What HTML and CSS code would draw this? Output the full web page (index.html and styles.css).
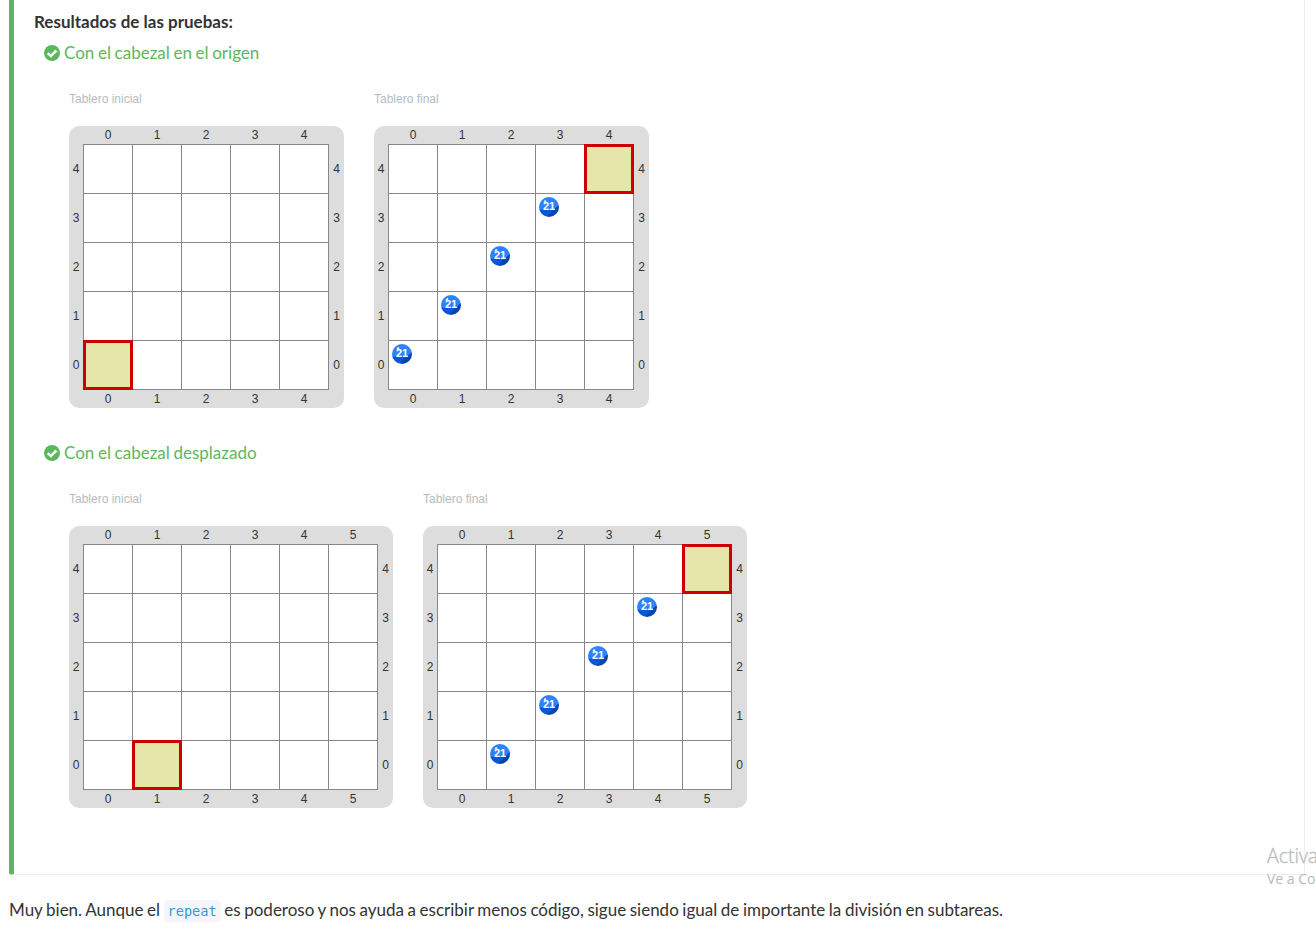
FILE: index.html
```
<!DOCTYPE html>
<html lang="es">
<head>
<meta charset="utf-8">
<title>Resultados de las pruebas</title>
<link rel="stylesheet" href="styles.css">
</head>
<body>
<section class="results">
  <strong class="results-title">Resultados de las pruebas:</strong>

  <article class="test">
    <h2 class="test-name">
      <svg class="check" viewBox="0 0 16 16"><circle cx="8" cy="8" r="8"/><path d="M3.7 8.1 6.8 11.1 12.4 5.5"/></svg>
      <span>Con el cabezal en el origen</span>
    </h2>
    <div class="boards">
      <figure class="state" data-cols="5" data-head="0,4"><figcaption>Tablero inicial</figcaption></figure>
      <figure class="state" data-cols="5" data-head="4,0" data-balls="3,1 2,2 1,3 0,4"><figcaption>Tablero final</figcaption></figure>
    </div>
  </article>

  <article class="test">
    <h2 class="test-name">
      <svg class="check" viewBox="0 0 16 16"><circle cx="8" cy="8" r="8"/><path d="M3.7 8.1 6.8 11.1 12.4 5.5"/></svg>
      <span>Con el cabezal desplazado</span>
    </h2>
    <div class="boards">
      <figure class="state" data-cols="6" data-head="1,4"><figcaption>Tablero inicial</figcaption></figure>
      <figure class="state" data-cols="6" data-head="5,0" data-balls="4,1 3,2 2,3 1,4"><figcaption>Tablero final</figcaption></figure>
    </div>
  </article>
</section>

<p class="feedback">Muy bien. Aunque el <code>repeat</code> es poderoso y nos ayuda a escribir menos código, sigue siendo igual de importante la división en subtareas.</p>

<aside class="watermark">
  <div class="watermark-title">Activa</div>
  <div class="watermark-text">Ve a Co</div>
</aside>
<script src="boards.js"></script>
</body>
</html>
```
FILE: styles.css
```
* { box-sizing: border-box; }
body {
  margin: 0;
  height: 929px;
  overflow: hidden;
  position: relative;
  background: #fff;
  color: #333;
  font-family: Lato, sans-serif;
  font-size: 17px;
}
.results {
  height: 875px;
  margin: 0 11px 0 9px;
  padding: 10px 0 0 20px;
  border: solid #eee;
  border-width: 0 1px 1px 0;
  border-left: 5px solid #5cb85c;
  border-bottom-left-radius: 3px;
}
.results-title {
  display: block;
  height: 31px;
  line-height: 24px;
}
.test { height: 400px; }
.test-name {
  display: flex;
  align-items: center;
  gap: 4px;
  height: 24px;
  margin: 0 0 0 10px;
  color: #5cb85c;
  font-size: 17px;
  font-weight: 400;
  line-height: 24px;
  word-spacing: -0.7px;
}
.check { width: 16px; height: 16px; fill: #5cb85c; }
.check path { fill: none; stroke: #fff; stroke-width: 2.5; }
.boards {
  display: flex;
  gap: 30px;
  padding: 26px 0 0 35px;
  font-family: "Liberation Sans", Arial, sans-serif;
  font-size: 12px;
}
.state { margin: 0; }
.state figcaption {
  height: 35px;
  padding-top: 1px;
  line-height: 15px;
  color: #b4bcc2;
}
.board {
  display: grid;
  grid-template:
    ". top ." 18px
    "left field right" auto
    ". bottom ." 18px / 14px auto 15px;
  border-radius: 10px;
  background: #ddd;
}
.axis { display: flex; text-align: center; }
.top, .bottom { line-height: 18px; }
.top div, .bottom div { width: 49px; padding-left: 1px; }
.left, .right { flex-direction: column; line-height: 49px; padding-top: 1px; }
.left div, .right div { height: 49px; }
.top { grid-area: top; }
.left { grid-area: left; }
.right { grid-area: right; }
.bottom { grid-area: bottom; }
.field {
  display: grid;
  grid-area: field;
  border: solid #888;
  border-width: 0 1px 1px 0;
  background: #fff;
}
.cell {
  position: relative;
  width: 49px;
  height: 49px;
  padding: 3px;
  border: solid #888;
  border-width: 1px 0 0 1px;
}
.head::after {
  content: "";
  position: absolute;
  z-index: 1;
  inset: -1px;
  border: 3px solid #c00;
  background: #e6e6aa;
}
.ball {
  position: relative;
  width: 20px;
  height: 20px;
  border-radius: 50%;
  background:
    linear-gradient(135deg, transparent 67%, #0545ae 71%),
    linear-gradient(180deg, #2c82ff 60%, #0757d8 65%);
  color: #fff;
  font-size: 11px;
  font-weight: 700;
  line-height: 19px;
  text-align: center;
}
.ball::before {
  content: "";
  position: absolute;
  left: 5px;
  top: 3px;
  width: 2px;
  height: 3px;
  border-radius: 1px;
  background: #e4efff;
  transform: rotate(35deg);
}
.feedback {
  margin: 23px 0 0 9px;
  line-height: 24px;
  white-space: nowrap;
  word-spacing: -0.76px;
}
.feedback code {
  padding: 3px 4px;
  border-radius: 4px;
  background: #f5f5fc;
  color: #3498db;
  font-family: "DejaVu Sans Mono", monospace;
  font-size: 13.6px;
}
.watermark {
  position: absolute;
  left: 1267px;
  right: 0;
  top: 844px;
  overflow: hidden;
  color: #b9b9b9;
  font-family: "Open Sans", sans-serif;
  white-space: nowrap;
}
.watermark-title { font-size: 19.5px; font-weight: 300; line-height: 24px; -webkit-text-stroke: 0.3px #b9b9b9; }
.watermark-text { font-size: 14px; line-height: 22px; }
```
FILE: boards.js
```
const ROWS = 5;

function element(className, text) {
  const node = document.createElement('div');
  if (className) node.className = className;
  if (text !== undefined) node.textContent = text;
  return node;
}

function axis(side, labels) {
  const node = element(`axis ${side}`);
  labels.forEach((label) => node.append(element('', label)));
  return node;
}

document.querySelectorAll('.state').forEach((state) => {
  const cols = Number(state.dataset.cols);
  const balls = (state.dataset.balls || '').split(' ');
  const xs = Array.from({ length: cols }, (_, i) => i);
  const ys = Array.from({ length: ROWS }, (_, i) => ROWS - 1 - i);
  const field = element('field');
  field.style.gridTemplateColumns = `repeat(${cols}, 49px)`;
  for (let y = 0; y < ROWS; y++) {
    for (let x = 0; x < cols; x++) {
      const key = `${x},${y}`;
      const cell = element(key === state.dataset.head ? 'cell head' : 'cell');
      if (balls.includes(key)) cell.append(element('ball', '21'));
      field.append(cell);
    }
  }
  const board = element('board');
  board.append(axis('top', xs), axis('left', ys), field, axis('right', ys), axis('bottom', xs));
  state.append(board);
});
```
